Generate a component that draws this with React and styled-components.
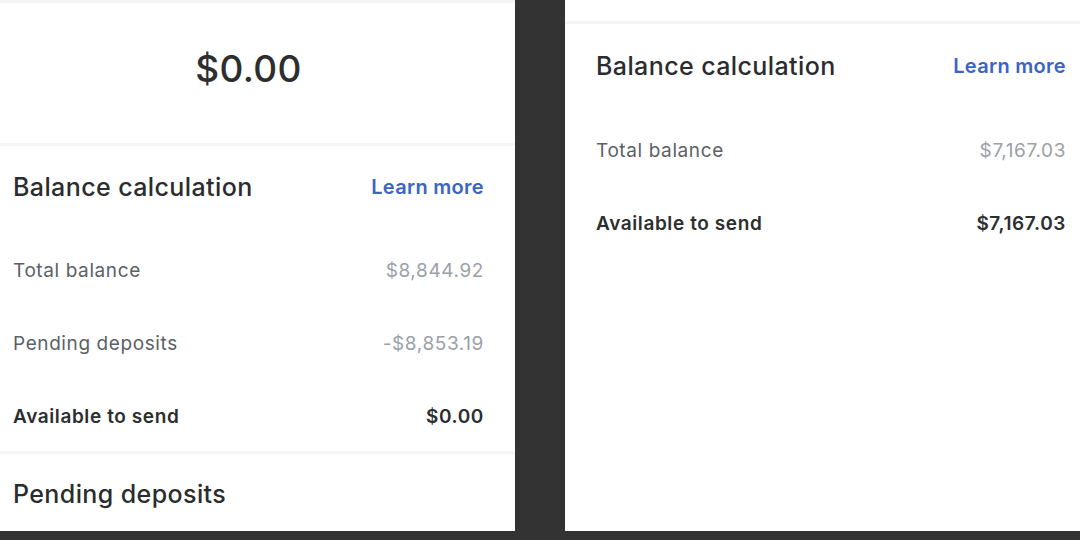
import React from 'react';
import styled, { createGlobalStyle } from 'styled-components';

const GlobalStyle = createGlobalStyle`
  html, body {
    margin: 0;
    padding: 0;
    background: #333333;
  }
  body {
    font-family: Inter, "Liberation Sans", sans-serif;
    -webkit-font-smoothing: antialiased;
  }
`;

const Page = styled.div`
  width: 1080px;
  height: 540px;
  background: #333333;
  display: flex;
  gap: 50px;
  align-items: flex-start;
  overflow: hidden;
`;

const Panel = styled.div`
  width: ${props => props.width}px;
  height: 531px;
  background: #ffffff;
  display: flex;
  flex-direction: column;
  padding: ${props => props.padding};
  box-sizing: border-box;
  flex-shrink: 0;
  overflow: hidden;

  & > * {
    flex-shrink: 0;
  }
`;

const AmountBlock = styled.div`
  height: ${props => props.height}px;
  display: flex;
  align-items: center;
  justify-content: center;
  padding-bottom: 10px;
  box-sizing: border-box;
  font-size: 37px;
  font-weight: 500;
  color: #2c2e2f;
  letter-spacing: 0.3px;
`;

const Divider = styled.div`
  height: 3px;
  margin: ${props => props.margin || '0'};
  background: #f3f5f6;
`;

const Header = styled.div`
  height: ${props => props.height}px;
  padding-bottom: ${props => props.bottom}px;
  box-sizing: border-box;
  display: flex;
  align-items: center;
  justify-content: space-between;
`;

const Title = styled.div`
  font-size: 25px;
  font-weight: 500;
  color: #2a2c2e;
  letter-spacing: 0.4px;
`;

const LearnMore = styled.a`
  font-size: 20px;
  font-weight: 600;
  color: #3b64c4;
  letter-spacing: 0.3px;
  text-decoration: none;
`;

const Row = styled.div`
  height: 73px;
  display: flex;
  align-items: center;
  justify-content: space-between;
  font-size: 19px;
  letter-spacing: 0.6px;
`;

const Label = styled.span`
  color: ${props => (props.strong ? '#2c2e2f' : '#5b6166')};
  font-weight: ${props => (props.strong ? 600 : 400)};
`;

const Value = styled.span`
  color: ${props => (props.strong ? '#2c2e2f' : '#9aa1a8')};
  font-weight: ${props => (props.strong ? 600 : 400)};
`;

function BalanceRows({ rows }) {
  return rows.map(row => (
    <Row key={row.label}>
      <Label strong={row.strong}>{row.label}</Label>
      <Value strong={row.strong}>{row.value}</Value>
    </Row>
  ));
}

export default function App() {
  return (
    <>
      <GlobalStyle />
      <Page>
        <Panel width={515} padding="0 31px 0 13px">
          <Divider margin="0 -31px 0 -13px" />
          <AmountBlock height={140}>$0.00</AmountBlock>
          <Divider margin="0 -31px 0 -13px" />
          <Header height={88} bottom={6}>
            <Title>Balance calculation</Title>
            <LearnMore href="#">Learn more</LearnMore>
          </Header>
          <BalanceRows
            rows={[
              { label: 'Total balance', value: '$8,844.92' },
              { label: 'Pending deposits', value: '-$8,853.19' },
              { label: 'Available to send', value: '$0.00', strong: true },
            ]}
          />
          <Divider margin="-2px -31px 0 -13px" />
          <Header height={88} bottom={8}>
            <Title>Pending deposits</Title>
          </Header>
        </Panel>
        <Panel width={515} padding="0 14px 0 31px">
          <AmountBlock height={21} />
          <Divider margin="0 -14px 0 -31px" />
          <Header height={90} bottom={6}>
            <Title>Balance calculation</Title>
            <LearnMore href="#">Learn more</LearnMore>
          </Header>
          <BalanceRows
            rows={[
              { label: 'Total balance', value: '$7,167.03' },
              { label: 'Available to send', value: '$7,167.03', strong: true },
            ]}
          />
        </Panel>
      </Page>
    </>
  );
}
